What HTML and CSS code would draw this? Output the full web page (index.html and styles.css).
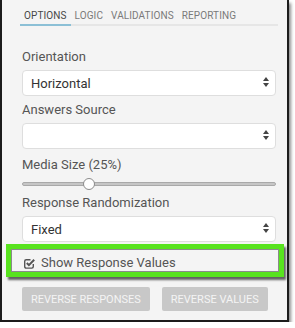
FILE: index.html
```html
<!DOCTYPE html>
<html lang="en">
<head>
  <meta charset="UTF-8">
  <meta name="viewport" content="width=device-width, initial-scale=1.0">
  <title>Question Options</title>
  <link rel="stylesheet" href="styles.css">
</head>
<body>

<div class="panel">
  <ul class="tabs">
    <li class="tab active">Options</li>
    <li class="tab">Logic</li>
    <li class="tab">Validations</li>
    <li class="tab">Reporting</li>
  </ul>

  <div class="form">
    <div class="field">
      <label class="field-label">Orientation</label>
      <div class="select">
        <span>Horizontal</span>
        <svg class="select-arrows" width="6" height="10" viewBox="0 0 6 10"><path d="M3 0 L6 4 L0 4 Z M0 6 L6 6 L3 10 Z" fill="#444"/></svg>
      </div>
    </div>

    <div class="field">
      <label class="field-label">Answers Source</label>
      <div class="select">
        <span></span>
        <svg class="select-arrows" width="6" height="10" viewBox="0 0 6 10"><path d="M3 0 L6 4 L0 4 Z M0 6 L6 6 L3 10 Z" fill="#444"/></svg>
      </div>
    </div>

    <div class="field field-range">
      <label class="field-label">Media Size (25%)</label>
      <div class="range">
        <div class="range-track"></div>
        <div class="range-thumb" style="left: calc((100% - 12px) * 0.25)"></div>
      </div>
    </div>

    <div class="field">
      <label class="field-label">Response Randomization</label>
      <div class="select">
        <span>Fixed</span>
        <svg class="select-arrows" width="6" height="10" viewBox="0 0 6 10"><path d="M3 0 L6 4 L0 4 Z M0 6 L6 6 L3 10 Z" fill="#444"/></svg>
      </div>
    </div>

    <!-- highlighted row -->
    <div class="highlight">
      <div class="check-row">
        <svg class="check-icon" width="11" height="11" viewBox="0 0 11 11">
          <path d="M9.3 6 V8.6 Q9.3 10.1 7.8 10.1 H2.2 Q0.7 10.1 0.7 8.6 V3.2 Q0.7 1.7 2.2 1.7 H6.5" fill="none" stroke="#555" stroke-width="1.4"/>
          <path d="M2.8 5 L4.9 7.1 L10.2 1.8" fill="none" stroke="#555" stroke-width="2"/>
        </svg>
        <span>Show Response Values</span>
      </div>
    </div>

    <div class="actions">
      <button class="btn">Reverse Responses</button>
      <button class="btn">Reverse Values</button>
    </div>
  </div>
</div>

</body>
</html>
```

FILE: styles.css
```css
body {
  margin: 0;
  background-color: #fff;
  font-family: Roboto, "Liberation Sans", sans-serif;
}

.panel {
  width: 289px;
  height: 322px;
  box-sizing: border-box;
  padding: 0 11px 0 20px;
  background-color: #f4f4f4;
  border: 2px solid #1c1c1c;
  border-top: none;
  box-shadow: 2px 3px 3px rgba(0, 0, 0, 0.45);
}

.tabs {
  display: flex;
  list-style-type: none;
  margin: 0 -2px;
  padding: 0;
  border-bottom: 2px solid #e6e6e6;
}

.tab {
  padding: 9px 4px 1px;
  margin-bottom: -2px;
  font-size: 10px;
  line-height: 14px;
  letter-spacing: 0.1px;
  text-transform: uppercase;
  color: #7a7a7a;
  border-bottom: 2px solid transparent;
}

.tab.active {
  color: #474747;
  border-bottom-color: #8cc0d6;
}

.form {
  margin-top: 22px;
}

.field {
  margin-bottom: 5px;
}

.field-label {
  display: block;
  font-size: 13px;
  line-height: 18px;
  color: #555;
}

.select {
  display: flex;
  align-items: center;
  justify-content: space-between;
  height: 26px;
  margin-top: 4px;
  padding: 0 6px 0 8px;
  box-sizing: border-box;
  background-color: #fff;
  border: 1px solid #dedede;
  border-radius: 4px;
  font-size: 13px;
  color: #333;
}

.select-arrows {
  margin-top: -2px;
}

.field-range {
  margin-top: 7px;
  margin-bottom: 4px;
}

.range {
  position: relative;
  height: 12px;
  margin-top: 4px;
  display: flex;
  align-items: center;
}

.range-track {
  flex: 1;
  height: 4px;
  box-sizing: border-box;
  background-color: #c6c6c6;
  border: 1px solid #a9a9a9;
  border-radius: 2px;
}

.range-thumb {
  position: absolute;
  top: 0;
  width: 12px;
  height: 12px;
  box-sizing: border-box;
  background-color: #fff;
  border: 1px solid #8c8c8c;
  border-radius: 50%;
}

.highlight {
  margin: -3px -8px 0 -16px;
  border: 5px solid #58e31e;
  box-shadow: 2px 3px 2px rgba(0, 0, 0, 0.6);
}

.check-row {
  display: flex;
  align-items: center;
  height: 23px;
  box-sizing: border-box;
  padding: 5px 0 0 12px;
  border: 1px solid #8a8a8a;
  font-size: 13px;
  line-height: 18px;
  color: #555;
}

.check-icon {
  margin-right: 6px;
  margin-top: 1px;
}

.actions {
  display: flex;
  gap: 12px;
  margin-top: 10px;
}

.btn {
  height: 24px;
  padding: 0 9px;
  background-color: #c8c8c8;
  color: #f4f4f4;
  border: none;
  border-radius: 2px;
  font-family: Roboto, "Liberation Sans", sans-serif;
  font-size: 11px;
  text-transform: uppercase;
  cursor: pointer;
  outline: none;
}
```
